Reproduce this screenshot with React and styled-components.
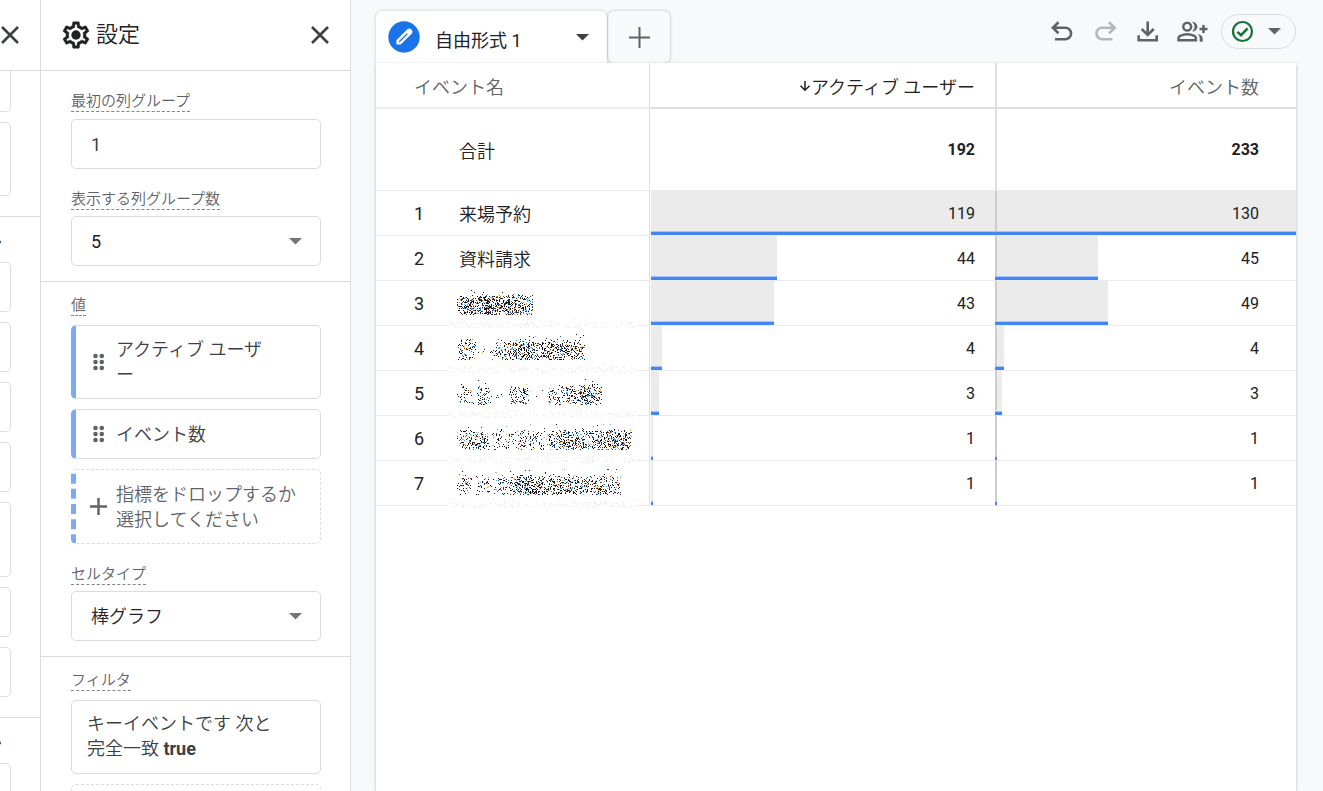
import React from "react";
import styled, { createGlobalStyle } from "styled-components";

const GlobalStyle = createGlobalStyle`
*{
  box-sizing: border-box;
}
body{
  margin: 0;
  background: #f8f9fb;
  color: #202124;
  font-family: Roboto, "Noto Sans CJK JP", sans-serif;
  font-size: 18px;
}
button, input, select{
  font-family: inherit;
  font-size: inherit;
  color: inherit;
}
button{
  border: 0;
  padding: 0;
  background: none;
  cursor: pointer;
}
svg{
  display: block;
  flex: none;
}
`;

const Page = styled.div`
width: 100%;
height: 100vh;
display: flex;
overflow: hidden;
`;

const Rail = styled.aside`
width: 41px;
flex: none;
overflow: hidden;
background: #fff;
border-right: 1px solid #dadce0;
`;

const RailHeader = styled.div`
height: 71px;
display: flex;
align-items: center;
justify-content: flex-end;
padding-right: 18px;
border-bottom: 1px solid #dadce0;
`;

const RailSection = styled.div`
display: flex;
flex-direction: column;
gap: 10px;
padding: 0 29px 20px 0;
border-bottom: 1px solid #dadce0;
`;

const RailHeading = styled.div`
height: 35px;
display: flex;
align-items: flex-end;
justify-content: flex-end;
padding: 0 10px 3px 0;
color: #3c5a9a;
`;

const RailCard = styled.div`
height: ${(p) => p.$h}px;
flex: none;
border: 1px solid #dadce0;
border-left: 0;
border-top-width: ${(p) => (p.$cut ? 0 : 1)}px;
border-radius: 0 ${(p) => (p.$cut ? 0 : 5)}px 5px 0;
`;

const Panel = styled.aside`
width: 310px;
flex: none;
background: #fff;
border-right: 1px solid #dadce0;
font-weight: 350;
`;

const PanelHeader = styled.header`
height: 71px;
display: flex;
align-items: center;
gap: 4px;
padding: 0 18px 0 19px;
border-bottom: 1px solid #dadce0;

h2{
  flex: 1;
  margin: 0;
  font-size: 22px;
  font-weight: 350;
  line-height: 32px;
}
`;

const Section = styled.section`
padding: ${(p) => p.$top}px 29px 15px 30px;
border-bottom: 1px solid #dadce0;
`;

const Field = styled.div`
& + &{
  margin-top: 20px;
}
`;

const Label = styled.label`
display: block;
width: fit-content;
margin-bottom: ${(p) => p.$gap || 6}px;
border-bottom: 1px dashed #80868b;
color: #5f6368;
font-size: 15px;
line-height: 20px;
`;

const TextInput = styled.input`
display: block;
width: 100%;
height: 50px;
padding: 0 19px;
border: 1px solid #dadce0;
border-radius: 5px;
background: #fff;
color: #3c4043;
`;

const SelectWrap = styled.div`
position: relative;

svg{
  position: absolute;
  right: 19px;
  top: 22px;
  pointer-events: none;
}
`;

const Select = styled.select`
display: block;
width: 100%;
height: 50px;
padding: 0 19px;
border: 1px solid #dadce0;
border-radius: 5px;
background: #fff;
font-weight: ${(p) => (p.$light ? 350 : 400)};
appearance: none;
`;

const ChipList = styled.div`
display: flex;
flex-direction: column;
gap: 10px;
`;

const Chip = styled.div`
min-height: 50px;
display: flex;
align-items: center;
gap: 9px;
padding: 11px 44px 11px 14px;
border: 1px solid #dadce0;
border-left: 5px solid #7baaf7;
border-radius: 5px;
color: #3c4043;
line-height: 25px;
line-break: anywhere;
`;

const DropZone = styled.button`
width: 100%;
min-height: 75px;
display: flex;
align-items: center;
gap: 9px;
padding: 0 14px;
border: 1px dashed #dadce0;
border-left: 5px dashed ${(p) => (p.$plain ? "#dadce0" : "#7baaf7")};
border-left-width: ${(p) => (p.$plain ? 1 : 5)}px;
border-radius: 5px;
color: #5f6368;
font-weight: 350;
line-height: 25px;
text-align: left;
`;

const FilterCard = styled.div`
min-height: 74px;
padding: 10px 40px 12px 15px;
border: 1px solid #dadce0;
border-radius: 5px;
color: #3c4043;
line-height: 25px;

b{
  font-weight: 700;
}
`;

const Main = styled.main`
flex: 1;
min-width: 0;
display: flex;
flex-direction: column;
padding: 11px 27px 0 25px;
`;

const TopBar = styled.div`
height: 52px;
flex: none;
display: flex;
justify-content: space-between;
`;

const Tabs = styled.div`
display: flex;
gap: 1px;
`;

const Tab = styled.button`
width: 231px;
display: flex;
align-items: center;
gap: 15px;
padding: 0 18px 0 12px;
background: #fff;
border-radius: 6px 6px 0 0;
box-shadow: 0 0 3px rgba(60, 64, 67, 0.3);
text-align: left;

span{
  flex: 1;
  padding-top: 4px;
}
`;

const AddTab = styled.button`
width: 62px;
display: flex;
align-items: center;
justify-content: center;
border-radius: 6px;
box-shadow: 0 0 3px rgba(60, 64, 67, 0.4);
`;

const Actions = styled.div`
height: 41px;
display: flex;
align-items: center;
gap: 15px;
`;

const IconButton = styled.button`
width: 28px;
height: 28px;
flex: none;
display: flex;
align-items: center;
justify-content: center;
`;

const StatusButton = styled.button`
width: 75px;
height: 35px;
display: flex;
align-items: center;
justify-content: space-between;
padding: 0 14px 0 9px;
border: 1px solid #dadce0;
border-radius: 18px;
`;

const Sheet = styled.div`
flex: 1;
position: relative;
background: #fff;
box-shadow: 0 1px 3px rgba(60, 64, 67, 0.35);
`;

const Table = styled.table`
width: 100%;
table-layout: fixed;
border-collapse: separate;
border-spacing: 0;
`;

const HeadCell = styled.th`
height: 46px;
padding: 2px ${(p) => p.$right || 0}px 0 ${(p) => (p.$name ? 38 : 0)}px;
border-bottom: 2px solid ${(p) => (p.$name ? "#ebebeb" : "#dfdfdf")};
border-left: ${(p) => p.$divider || "0"};
border-right: ${(p) => (p.$name ? "1px solid #dfdfdf" : "0")};
color: ${(p) => (p.$sorted ? "#202124" : "#5f6368")};
font-weight: 350;
text-align: ${(p) => (p.$name ? "left" : "right")};

svg{
  display: inline-block;
  vertical-align: 2px;
}
`;

const Row = styled.tr`
height: ${(p) => p.$h}px;

td{
  padding: 0;
  border-bottom: 1px solid #ebebeb;
}
`;

const IndexCell = styled.td`
&&{
  padding-left: 38px;
}
`;

const NameCell = styled.td`
position: relative;
font-weight: 350;

&&{
  padding-left: 11px;
  border-right: 1px solid #dfdfdf;
}
`;

const ValueCell = styled.td`
position: relative;
font-size: 16px;
font-weight: ${(p) => (p.$bold ? 700 : 400)};
text-align: right;

&&{
  padding-right: ${(p) => p.$right}px;
  border-left: ${(p) => p.$divider};
}

span{
  position: relative;
}
`;

const Bar = styled.div`
position: absolute;
left: ${(p) => (p.$over ? -2 : 0)}px;
top: 0;
bottom: 0;
min-width: 2px;
background: ${(p) => (p.$over ? "linear-gradient(to right, #cdcdcd 2px, #ebebeb 2px)" : "#ebebeb")};
border-bottom: 3px solid #4285f4;
box-shadow: inset 0 -1px #a6c5f9;
`;

const Scribble = styled.svg`
position: absolute;
left: 0;
top: 0;
`;

const Caret = ({ color = "#757575" }) => (
  <svg width="13" height="7" viewBox="0 0 13 7">
    <path d="M0 0h13L6.5 6.5z" fill={color} />
  </svg>
);

const Close = () => (
  <svg width="24" height="24" viewBox="0 0 24 24" fill="none" stroke="#3c4043" strokeWidth="2.6">
    <path d="M4 4l16 16M20 4L4 20" />
  </svg>
);

const Plus = ({ size, width = 2.4, color = "#5f6368" }) => (
  <svg width={size} height={size} viewBox={`0 0 ${size} ${size}`} stroke={color} strokeWidth={width}>
    <path d={`M${size / 2} 0V${size}M0 ${size / 2}H${size}`} />
  </svg>
);

const Gear = () => (
  <svg width="32" height="32" viewBox="0 0 24 24" fill="#202124">
    <path
      fillRule="evenodd"
      stroke="#202124"
      strokeWidth=".3"
      d="M19.43 12.98c.04-.32.07-.64.07-.98 0-.34-.03-.66-.07-.98l2.11-1.65c.19-.15.24-.42.12-.64l-2-3.46a.5.5 0 00-.61-.22l-2.49 1c-.52-.4-1.08-.73-1.69-.98l-.38-2.65A.488.488 0 0014 2h-4c-.25 0-.46.18-.49.42l-.38 2.65c-.61.25-1.17.59-1.69.98l-2.49-1a.566.566 0 00-.18-.03c-.17 0-.34.09-.43.25l-2 3.46c-.13.22-.07.49.12.64l2.11 1.65c-.04.32-.07.65-.07.98 0 .33.03.66.07.98l-2.11 1.65c-.19.15-.24.42-.12.64l2 3.46a.5.5 0 00.61.22l2.49-1c.52.4 1.08.73 1.69.98l.38 2.65c.03.24.24.42.49.42h4c.25 0 .46-.18.49-.42l.38-2.65c.61-.25 1.17-.59 1.69-.98l2.49 1c.06.02.12.03.18.03.17 0 .34-.09.43-.25l2-3.46c.12-.22.07-.49-.12-.64l-2.11-1.65zm-1.98-1.71c.04.31.05.52.05.73 0 .21-.02.43-.05.73l-.14 1.13.89.7 1.08.84-.7 1.21-1.27-.51-1.04-.42-.9.68c-.43.32-.84.56-1.25.73l-1.06.43-.16 1.13-.2 1.35h-1.4l-.19-1.35-.16-1.13-1.06-.43c-.43-.18-.83-.41-1.23-.71l-.91-.7-1.06.43-1.27.51-.7-1.21 1.08-.84.89-.7-.14-1.13c-.03-.31-.05-.54-.05-.74s.02-.43.05-.73l.14-1.13-.89-.7-1.08-.84.7-1.21 1.27.51 1.04.42.9-.68c.43-.32.84-.56 1.25-.73l1.06-.43.16-1.13.2-1.35h1.39l.19 1.35.16 1.13 1.06.43c.43.18.83.41 1.23.71l.91.7 1.06-.43 1.27-.51.7 1.21-1.07.85-.89.7.14 1.13z"
    />
    <circle cx="12" cy="12" r="3.5" />
  </svg>
);

const Grip = () => (
  <svg width="17" height="18" viewBox="0 0 17 18" fill="#5f6368">
    {[3, 9, 15].map((y) => (
      <React.Fragment key={y}>
        <circle cx="5.5" cy={y} r="2.3" />
        <circle cx="11.8" cy={y} r="2.3" />
      </React.Fragment>
    ))}
  </svg>
);

const Pencil = () => (
  <svg width="32" height="32" viewBox="0 0 32 32">
    <circle cx="16" cy="16" r="15.7" fill="#1a73e8" />
    <path
      d="M9.2 22.8V19.6L19.9 8.9Q21.4 7.7 22.8 9.2Q24.3 10.6 23.1 12.1L12.4 22.8Z"
      fill="#fff"
      stroke="#fff"
      strokeWidth="1.6"
      strokeLinejoin="round"
    />
    <path d="M11 21L19.4 12.6" stroke="#1a73e8" strokeWidth="1.3" />
  </svg>
);

const Undo = ({ flip }) => (
  <svg
    width="28"
    height="28"
    viewBox="0 0 28 28"
    fill="none"
    stroke={flip ? "#b4b6b9" : "#5f6368"}
    strokeWidth="2.6"
  >
    <g transform={flip ? "matrix(-1 0 0 1 28 0)" : "translate(-1.5 0)"}>
      <path d="M11 4.2L5.4 9.7L11 15.2M5.4 9.7H17.8A5.6 5.6 0 0 1 17.8 21.2H7.5" />
    </g>
  </svg>
);

const Download = () => (
  <svg width="28" height="28" viewBox="0 0 28 28" fill="none" stroke="#5f6368" strokeWidth="2.6">
    <path d="M12.7 3.5V16.5M6.7 11L12.7 17L18.7 11M3.7 17.2V22.2H21.7V17.2" />
  </svg>
);

const GroupAdd = () => (
  <svg width="32" height="28" viewBox="0 0 32 28" fill="none" stroke="#5f6368" strokeWidth="2.5">
    <circle cx="11.2" cy="8.7" r="3.9" />
    <path d="M2.5 22.3V20.3Q2.5 18.7 4.2 17.8Q11.2 14.8 18.3 17.8Q19.9 18.7 19.9 20.3V22.3Z" />
    <path d="M16.8 4.2Q21 4.9 21 8.7T16.8 13.2Q19 11.2 19 8.7T16.8 4.2Z" fill="#5f6368" strokeWidth=".8" />
    <path d="M22.3 16.3Q26.5 17.5 26.5 20.3V23.5H23.9V20.3Q23.9 18.1 22.3 16.3Z" fill="#5f6368" strokeWidth=".4" />
    <path d="M27.5 7V15M23.5 11H31.5" />
  </svg>
);

const CheckCircle = () => (
  <svg width="23" height="23" viewBox="0 0 23 23" fill="none" stroke="#137333" strokeWidth="2.2">
    <circle cx="11.5" cy="11.5" r="9.5" />
    <path d="M6.5 11.8L10 15.2L16.6 8.3" strokeWidth="2.5" />
  </svg>
);

const SortArrow = () => (
  <svg width="12" height="12" viewBox="0 0 12 12" fill="none" stroke="#202124" strokeWidth="1.5">
    <path d="M6 1V10M1.5 5.8L6 10.2L10.5 5.8" />
  </svg>
);

// small deterministic generator, so the masked names stay the same between renders
const makeRandom = (seed) => {
  let s = seed;
  return () => {
    s = (s * 16807) % 2147483647;
    return s / 2147483647;
  };
};

const INKS = ["#111", "#111", "#111", "#111", "#1b2350", "#7a3510", "#e8a54c", "#5aaef0", "#2a6cae", "#c2f2ff", "#5a1a1a"];

// spans: [from, to, density, top, bottom]
function MaskedName({ seed, spans }) {
  const rnd = makeRandom(seed * 7919);
  const inks = {};
  const dot = (ink, x, y) => {
    inks[ink] = (inks[ink] || "") + `M${x} ${y}h1v1h-1z`;
  };
  spans.forEach(([from, to, density, top = 13, bottom = 34]) => {
    for (let y = top - 5; y < bottom; y++) {
      // thin out towards the top and bottom edge
      const fade = Math.min(1, (y < top ? 0.04 : 0.2 + (y - top) * 0.14), 0.5 + (bottom - y) * 0.12);
      for (let x = from; x < to; x++) {
        const side = Math.min(1, 0.4 + (x - from) * 0.1, 0.4 + (to - x) * 0.1);
        if (rnd() < density * fade * side) {
          dot(INKS[Math.floor(rnd() * INKS.length)], x, y);
        }
      }
    }
  });
  for (let y = 38; y < 47; y++) {
    for (let x = 1; x < 188; x++) {
      if (rnd() < (y > 40 ? 0.16 : 0.03)) dot("#ececec", x, y);
    }
  }
  return (
    <Scribble width="189" height="48" viewBox="0 0 189 48" role="img" aria-label="非表示" shapeRendering="crispEdges">
      <rect y="36" width="189" height="12" fill="#fff" />
      {Object.entries(inks).map(([ink, d]) => (
        <path key={ink} d={d} fill={ink} />
      ))}
    </Scribble>
  );
}

const rows = [
  { name: "来場予約", users: 119, events: 130 },
  { name: "資料請求", users: 44, events: 45 },
  { spans: [[9, 85, 0.5]], users: 43, events: 49 },
  { spans: [[9, 28, 0.26], [28, 46, 0.25, 23, 27], [44, 62, 0.34], [60, 90, 0.48], [88, 137, 0.4]], users: 4, events: 4 },
  { spans: [[9, 26, 0.24], [28, 44, 0.28], [44, 58, 0.2, 23, 27], [61, 82, 0.3], [84, 98, 0.2, 23, 27], [99, 120, 0.26], [118, 154, 0.4]], users: 3, events: 3 },
  { spans: [[9, 42, 0.36], [44, 66, 0.23], [66, 96, 0.22], [96, 110, 0.3], [108, 142, 0.4], [140, 184, 0.4]], users: 1, events: 1 },
  { spans: [[9, 24, 0.26], [28, 44, 0.22], [44, 64, 0.22], [62, 98, 0.48], [96, 134, 0.4], [132, 173, 0.32]], users: 1, events: 1 },
];

const maxUsers = Math.max(...rows.map((r) => r.users));
const maxEvents = Math.max(...rows.map((r) => r.events));

export default function App() {
  return (
    <Page>
      <GlobalStyle />
      <Rail>
        <RailHeader>
          <button aria-label="変数を閉じる"><Close /></button>
        </RailHeader>
        <RailSection>
          <RailCard $h={41} $cut />
          <RailCard $h={74} />
        </RailSection>
        <RailSection>
          <RailHeading><Plus size={14} color="#3c5a9a" /></RailHeading>
          <RailCard $h={50} />
          <RailCard $h={50} />
          <RailCard $h={50} />
          <RailCard $h={50} />
          <RailCard $h={75} />
          <RailCard $h={50} />
          <RailCard $h={50} />
        </RailSection>
        <RailSection>
          <RailHeading><Plus size={14} color="#3c5a9a" /></RailHeading>
          <RailCard $h={50} />
        </RailSection>
      </Rail>

      <Panel>
        <PanelHeader>
          <Gear />
          <h2>設定</h2>
          <button aria-label="設定を閉じる"><Close /></button>
        </PanelHeader>
        <Section $top={20}>
          <Field>
            <Label htmlFor="first-group" $gap={7}>最初の列グループ</Label>
            <TextInput id="first-group" defaultValue="1" />
          </Field>
          <Field>
            <Label htmlFor="group-count">表示する列グループ数</Label>
            <SelectWrap>
              <Select id="group-count" defaultValue="5">
                <option>5</option>
                <option>10</option>
              </Select>
              <Caret />
            </SelectWrap>
          </Field>
        </Section>
        <Section $top={13}>
          <Field>
            <Label as="div" $gap={9}>値</Label>
            <ChipList>
              <Chip><Grip />アクティブ ユーザー</Chip>
              <Chip><Grip />イベント数</Chip>
              <DropZone>
                <Plus size={17} />
                <span>指標をドロップするか<br />選択してください</span>
              </DropZone>
            </ChipList>
          </Field>
          <Field>
            <Label htmlFor="cell-type">セルタイプ</Label>
            <SelectWrap>
              <Select id="cell-type" $light defaultValue="棒グラフ">
                <option>棒グラフ</option>
                <option>書式なしテキスト</option>
              </Select>
              <Caret />
            </SelectWrap>
          </Field>
        </Section>
        <Section $top={13}>
          <Label as="div" $gap={9}>フィルタ</Label>
          <ChipList>
            <FilterCard>キーイベントです 次と<br />完全一致 <b>true</b></FilterCard>
            <DropZone $plain aria-label="フィルタを追加" />
          </ChipList>
        </Section>
      </Panel>

      <Main>
        <TopBar>
          <Tabs>
            <Tab>
              <Pencil />
              <span>自由形式 1</span>
              <Caret color="#3c4043" />
            </Tab>
            <AddTab aria-label="タブを追加"><Plus size={21} width={2} /></AddTab>
          </Tabs>
          <Actions>
            <IconButton aria-label="元に戻す"><Undo /></IconButton>
            <IconButton aria-label="やり直す"><Undo flip /></IconButton>
            <IconButton aria-label="ダウンロード"><Download /></IconButton>
            <IconButton aria-label="共有"><GroupAdd /></IconButton>
            <StatusButton aria-label="データの状態">
              <CheckCircle />
              <Caret color="#5f6368" />
            </StatusButton>
          </Actions>
        </TopBar>
        <Sheet>
          <Table>
            <colgroup>
              <col style={{ width: 72 }} />
              <col style={{ width: 202 }} />
              <col />
              <col style={{ width: 301 }} />
            </colgroup>
            <thead>
              <tr>
                <HeadCell $name colSpan={2}>イベント名</HeadCell>
                <HeadCell $sorted $right={20} $divider="1px solid #fff"><SortArrow />アクティブ ユーザー</HeadCell>
                <HeadCell $right={37} $divider="2px solid #dfdfdf">イベント数</HeadCell>
              </tr>
            </thead>
            <tbody>
              <Row $h={82}>
                <IndexCell />
                <NameCell>合計</NameCell>
                <ValueCell $bold $right={20} $divider="1px solid #fff">192</ValueCell>
                <ValueCell $bold $right={37} $divider="2px solid #dfdfdf">233</ValueCell>
              </Row>
              {rows.map((row, i) => (
                <Row key={i} $h={45}>
                  <IndexCell>{i + 1}</IndexCell>
                  <NameCell>{row.name || <MaskedName seed={i + 1} spans={row.spans} />}</NameCell>
                  <ValueCell $right={20} $divider="1px solid #fff">
                    <Bar style={{ width: `calc(${(row.users / maxUsers) * 100}% - ${i ? 1 : 0}px)` }} />
                    <span>{row.users}</span>
                  </ValueCell>
                  <ValueCell $right={37} $divider="2px solid #cdcdcd">
                    <Bar $over style={{ width: `calc(${(row.events / maxEvents) * 100}% + ${i ? 0 : 2}px)` }} />
                    <span>{row.events}</span>
                  </ValueCell>
                </Row>
              ))}
            </tbody>
          </Table>
        </Sheet>
      </Main>
    </Page>
  );
}
